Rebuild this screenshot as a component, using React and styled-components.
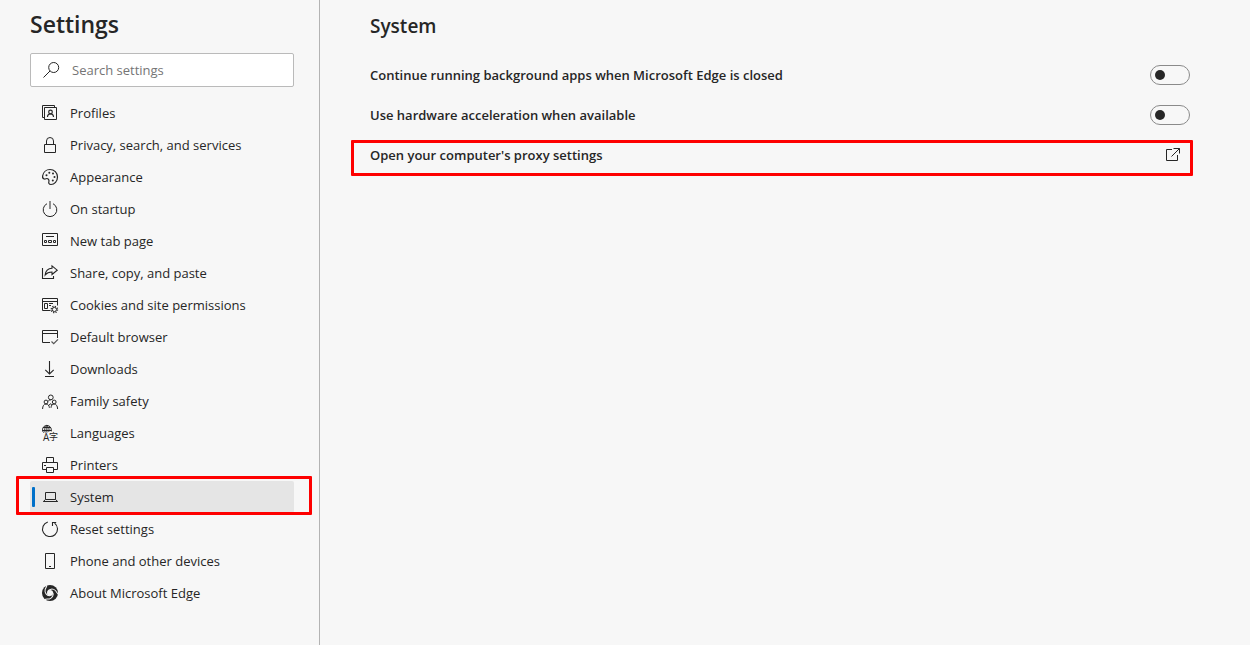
import React, {useState} from 'react'
import styled, {createGlobalStyle} from 'styled-components'

const GlobalStyle = createGlobalStyle`
  * {
    box-sizing: border-box;
  }
  body {
    margin: 0;
    background: #f7f7f7;
    color: #262626;
    font-family: "Segoe UI", "Open Sans", "Noto Sans", sans-serif;
    font-size: 13px;
    line-height: 20px;
  }
`

const Page = styled.div`
  display: flex;
  min-height: 100vh;
`

const Sidebar = styled.aside`
  flex: 0 0 320px;
  padding: 8px 25px 24px 30px;
  border-right: 1px solid #b3b3b3;
`

const Title = styled.h1`
  margin: 0;
  font-size: 23px;
  line-height: 33px;
  font-weight: 600;
`

const SearchBox = styled.label`
  display: flex;
  align-items: center;
  gap: 13px;
  height: 34px;
  margin: 12px 0 10px;
  padding: 0 12px;
  background: #fff;
  border: 1px solid #bababa;
  border-radius: 2px;
`

const SearchInput = styled.input`
  flex: 1;
  min-width: 0;
  padding: 0;
  border: none;
  outline: none;
  background: transparent;
  color: inherit;
  font: inherit;
  &::placeholder {
    color: #757575;
    opacity: 1;
  }
`

const Menu = styled.ul`
  margin: 0;
  padding: 0;
  list-style: none;
`

const MenuItem = styled.li`
  position: relative;
`

const MenuLink = styled.a`
  display: flex;
  align-items: center;
  gap: 12px;
  height: 32px;
  padding-left: 12px;
  border-radius: 2px;
  color: inherit;
  text-decoration: none;
  background: ${props => props.$active ? '#e5e5e5' : 'transparent'};
`

const ActiveBar = styled.span`
  position: absolute;
  top: 6px;
  left: 2px;
  width: 3px;
  height: 20px;
  border-radius: 1px;
  background: #0070c9;
`

// red frame drawn over a highlighted row
const Marker = styled.span`
  position: absolute;
  inset: ${props => props.$inset};
  border: 3px solid #fe0000;
  border-radius: 1px;
  pointer-events: none;
`

const Main = styled.main`
  flex: 1;
  padding: 12px 60px 12px 50px;
`

const Heading = styled.h2`
  margin: 0 0 15px;
  font-size: 19px;
  line-height: 28px;
  font-weight: 600;
`

const Row = styled.div`
  position: relative;
  display: flex;
  align-items: center;
  justify-content: space-between;
  height: 40px;
  font-weight: 600;
`

const RowLabel = styled.label`
  cursor: pointer;
`

const RowButton = styled.button`
  flex: 1;
  display: flex;
  align-items: center;
  justify-content: space-between;
  height: 40px;
  padding: 0 10px 0 0;
  border: none;
  background: transparent;
  color: inherit;
  font: inherit;
  cursor: pointer;
`

const Switch = styled.input`
  appearance: none;
  display: flex;
  align-items: center;
  width: 40px;
  height: 20px;
  margin: 0;
  padding: 0 4px;
  border: 1px solid #8a8a8a;
  border-radius: 10px;
  cursor: pointer;
  &::before {
    content: '';
    width: 10px;
    height: 10px;
    border-radius: 50%;
    background: #262626;
  }
  &:checked {
    justify-content: flex-end;
    background: #0070c9;
  }
  &:checked::before {
    background: #fff;
  }
`

const Svg = styled.svg`
  flex: none;
  width: 16px;
  height: 16px;
  overflow: visible;
  fill: none;
  stroke: #262626;
`

const Glyph = styled.text`
  fill: #262626;
  stroke: none;
  font-family: "Open Sans", "Noto Sans CJK SC", sans-serif;
  font-size: ${props => props.$size}px;
  font-weight: 400;
`

const Icon = ({children}) => (
  <Svg viewBox="0 0 16 16" aria-hidden="true">{children}</Svg>
)

// one blade gap of the Edge mark, repeated every third of a turn
const GAP = 'M-2.6 -.6C-2.4 -3.8 1.4 -5.4 4.2 -4.2C6 -3.4 6.8 -1.6 8.6 -1.8'

const icons = {
  search: <path d="M7 9L.5 15.5M10.7 .5a5 5 0 1 1 0 10a5 5 0 1 1 0-10z" />,
  profiles: (
    <>
      <path d="M2.5 12.5H.5V.5H12.5V2.5M2.5 2.5H14.5V14.5H2.5z" />
      <path strokeWidth="1.2" d="M5.5 12c0-2 1.2-3.2 3-3.2s3 1.2 3 3.2" />
      <circle strokeWidth="1.2" cx="8.5" cy="7" r="1.8" />
    </>
  ),
  privacy: <path d="M2.5 7.5H13.5V15.5H2.5zM4.5 7.5V4a3.5 3.5 0 0 1 7 0V7.5" />,
  appearance: (
    <>
      <path strokeWidth="1.2" d="M6.2 10C4.8 8.6 3.8 10.3 2.4 10C.8 9.7.4 8.4.6 7C1.2 3.2 4.2.5 8 .5C12.2.5 15.5 3.8 15.5 8C15.5 12.2 12.4 15.5 9 15.5C6.8 15.5 6.4 14 6.9 12.6C7.2 11.6 7.1 10.8 6.2 10z" />
      <g fill="#262626" stroke="none">
        <circle cx="4.5" cy="6.3" r="1" />
        <circle cx="7.3" cy="3.7" r="1" />
        <circle cx="11" cy="4.5" r="1" />
        <circle cx="12.5" cy="8" r="1" />
        <circle cx="10.8" cy="11.5" r="1" />
      </g>
    </>
  ),
  startup: <path d="M8 0V8M5 2.7a6.8 6.8 0 1 0 6 0" />,
  newTab: (
    <path d="M.5 .5H15.5V12.5H.5zM4 3.5H12M2.5 7.5h2v2h-2zM6.5 7.5h3v2h-3zM11.5 7.5h2v2h-2z" />
  ),
  share: (
    <path strokeWidth="1.1" d="M.5 3V13.5H11.5V11M10 .9L15.2 5.2L10 9.5V7C6.8 7 4.8 7.8 3.2 9.8C3.6 6.2 5.8 3.6 10 3.3z" />
  ),
  cookies: (
    <>
      <path d="M8.5 13.5H.5V1.5H15.5V8.5M.5 4.5H15.5M2.5 6.5H5.5V11.5H2.5zM7 6.5H11M7 8.5H9" />
      <circle cx="12.4" cy="12.5" r="2.1" />
      <circle cx="12.4" cy="12.5" r="3.2" strokeWidth="1.2" strokeDasharray="1.2 1.313" />
    </>
  ),
  browser: (
    <>
      <path d="M8 13.5H.5V1.5H15.5V9M.5 4.5H15.5" />
      <path stroke="#555" strokeWidth="1.2" d="M9.5 12.5L11.7 14.6L16 10.3" />
    </>
  ),
  downloads: <path strokeWidth="1.1" d="M7.5 0V13M3.3 8.8L7.5 13L11.7 8.8M3 15.5H12" />,
  family: (
    <>
      <circle cx="8.8" cy="4.4" r="2.4" />
      <circle cx="4" cy="9" r="1.9" />
      <circle cx="12.2" cy="9" r="1.9" />
      <path d="M.6 16c0-3 1.2-5 3.4-5s3.2 1.6 3.4 3.8M9 14.8c.2-2.4 1.2-3.8 3.2-3.8s3.4 2 3.4 5M6 8.4c.6-1 1.6-1.6 2.8-1.6M6.6 12.6L8.6 10.6L9.6 12" />
    </>
  ),
  languages: (
    <>
      <path d="M1.6 7.6C.9 6.8.5 5.8.5 4.8a4.4 4.4 0 0 1 8.8 0V6.4M1 2.5H9M.6 5.5H9.2M4.9 .4V7.6M3.2 7.6C2.2 4.8 2.8 1.8 4.9 .4C7 1.8 7.4 4.2 6.8 6.8" />
      <Glyph $size={10} x="1" y="16">A</Glyph>
      <Glyph $size={9} x="7" y="15">字</Glyph>
    </>
  ),
  printers: (
    <path d="M4.5 5.5V.5H11.5V5.5M4.5 12.5H.5V5.5H15.5V12.5H11.5M4.5 10.5H11.5V15.5H4.5zM2 8.5H4" />
  ),
  system: <path d="M3.5 10.5V3.5H13.5V10.5zM3.5 10.5L1.3 12.5H15.7L13.5 10.5" />,
  reset: <path strokeWidth="1.1" d="M5.8 .9a7.5 7.5 0 1 0 6.8 1.2M10.5 5V1.5H14.2" />,
  phone: <path d="M3.5 .5H12.5V15.5H3.5zM7 13.5H9" />,
  about: (
    <>
      <circle cx="8" cy="8" r="8" fill="#262626" stroke="none" />
      <circle cx="8" cy="8" r="3" fill="#f7f7f7" stroke="none" />
      <g stroke="#f7f7f7">
        <path d={GAP} transform="translate(8 8) rotate(20)" />
        <path d={GAP} transform="translate(8 8) rotate(140)" />
        <path d={GAP} transform="translate(8 8) rotate(260)" />
      </g>
    </>
  ),
  external: <path d="M8 2.5H2.5V13.5H13.5V8M9.5 1.5H15.5V6.5M15.5 1.5L7.5 9.5" />,
}

const menu = [
  {icon: 'profiles', text: 'Profiles'},
  {icon: 'privacy', text: 'Privacy, search, and services'},
  {icon: 'appearance', text: 'Appearance'},
  {icon: 'startup', text: 'On startup'},
  {icon: 'newTab', text: 'New tab page'},
  {icon: 'share', text: 'Share, copy, and paste'},
  {icon: 'cookies', text: 'Cookies and site permissions'},
  {icon: 'browser', text: 'Default browser'},
  {icon: 'downloads', text: 'Downloads'},
  {icon: 'family', text: 'Family safety'},
  {icon: 'languages', text: 'Languages'},
  {icon: 'printers', text: 'Printers'},
  {icon: 'system', text: 'System'},
  {icon: 'reset', text: 'Reset settings'},
  {icon: 'phone', text: 'Phone and other devices'},
  {icon: 'about', text: 'About Microsoft Edge'},
]

const SwitchRow = ({id, label}) => {
  const [on, setOn] = useState(false)

  return (
    <Row>
      <RowLabel htmlFor={id}>{label}</RowLabel>
      <Switch
        id={id}
        type="checkbox"
        role="switch"
        checked={on}
        onChange={e => setOn(e.target.checked)}
      />
    </Row>
  )
}

const App = () => {
  const [query, setQuery] = useState('')
  const active = 'system'

  return (
    <Page>
      <GlobalStyle />
      <Sidebar>
        <Title>Settings</Title>
        <SearchBox>
          <Icon>{icons.search}</Icon>
          <SearchInput
            type="text"
            aria-label="Search settings"
            placeholder="Search settings"
            value={query}
            onChange={e => setQuery(e.target.value)}
          />
        </SearchBox>
        <nav>
          <Menu>
            {menu.map(item => (
              <MenuItem key={item.icon}>
                <MenuLink href={`#${item.icon}`} $active={item.icon === active}>
                  <Icon>{icons[item.icon]}</Icon>
                  {item.text}
                </MenuLink>
                {item.icon === active && (
                  <>
                    <ActiveBar />
                    <Marker $inset="-5px -18px -2px -14px" />
                  </>
                )}
              </MenuItem>
            ))}
          </Menu>
        </nav>
      </Sidebar>
      <Main>
        <Heading>System</Heading>
        <SwitchRow
          id="background-apps"
          label="Continue running background apps when Microsoft Edge is closed"
        />
        <SwitchRow
          id="hardware-acceleration"
          label="Use hardware acceleration when available"
        />
        <Row>
          <RowButton type="button">
            Open your computer's proxy settings
            <Icon>{icons.external}</Icon>
          </RowButton>
          <Marker $inset="5px -3px -1px -19px" />
        </Row>
      </Main>
    </Page>
  )
}

export default App
